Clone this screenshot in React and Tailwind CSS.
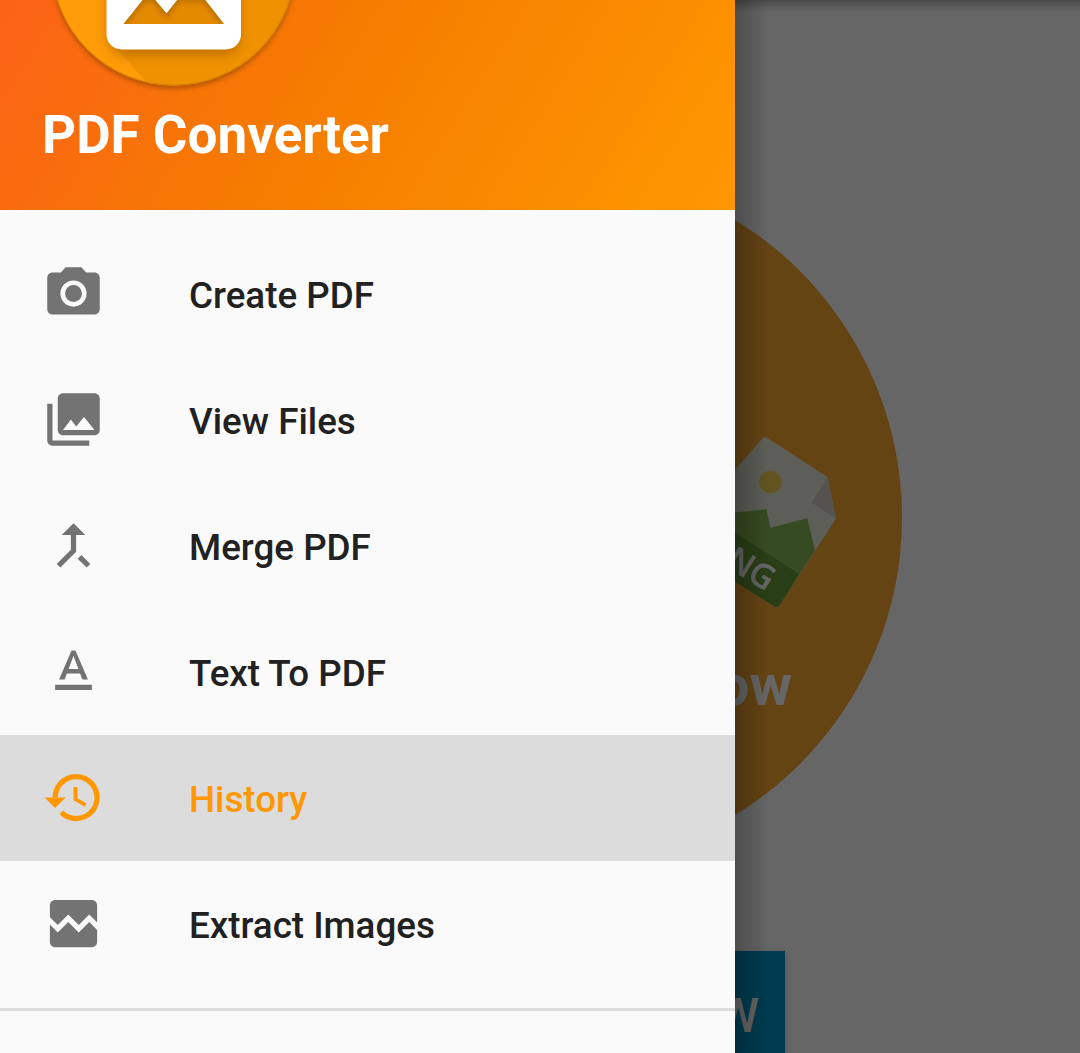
import { MdCameraAlt, MdCollections, MdCallMerge, MdTextFormat, MdHistory, MdBrokenImage } from "react-icons/md";

const items = [
  { label: "Create PDF", Icon: MdCameraAlt },
  { label: "View Files", Icon: MdCollections },
  { label: "Merge PDF", Icon: MdCallMerge },
  { label: "Text To PDF", Icon: MdTextFormat },
  { label: "History", Icon: MdHistory, active: true },
  { label: "Extract Images", Icon: MdBrokenImage },
];

function Logo() {
  return (
    <svg className="block h-[100px] w-[310px]" viewBox="0 0 310 100" aria-hidden="true">
      <defs>
        <filter id="soft" x="-20%" y="-20%" width="140%" height="140%">
          <feGaussianBlur stdDeviation="2.5" />
        </filter>
        <filter id="softer" x="-30%" y="-30%" width="160%" height="160%">
          <feGaussianBlur stdDeviation="6" />
        </filter>
        <clipPath id="disc">
          <circle cx="173.5" cy="-36.5" r="122" />
        </clipPath>
        <clipPath id="peaks">
          <path d="M123.5 24 143.5 -1H154.5L166.5 13.5 178 -1H204.5L224 24Z" />
        </clipPath>
      </defs>
      <circle cx="173.5" cy="-33.5" r="122" fill="#9a4a00" opacity=".75" filter="url(#soft)" />
      <circle cx="173.5" cy="-36.5" r="122" fill="#ff9c08" />
      <g clipPath="url(#disc)">
        <path d="M110 42 160 97H310V-10H230Z" fill="#f09200" />
        <rect x="108" y="-60" width="132" height="115" rx="16" fill="#a86000" opacity=".65" filter="url(#softer)" />
        <circle cx="173.5" cy="-36.5" r="121.5" fill="none" stroke="#c27600" strokeWidth="1" opacity=".6" />
      </g>
      <rect x="106.5" y="-60" width="134.5" height="109.5" rx="15" fill="#fff" />
      <g clipPath="url(#peaks)">
        <rect x="120" y="-4" width="110" height="30" fill="#e48a00" />
        <path d="M123.5 24 143.5 -1H154.5L166.5 13.5 178 -1H204.5L224 24" fill="none" stroke="#a86500" strokeWidth="6" opacity=".7" filter="url(#soft)" />
      </g>
    </svg>
  );
}

function PngFile() {
  return (
    <svg className="block h-[180px] w-[200px]" viewBox="640 430 200 180" aria-hidden="true">
      <path d="M767.5 438 827.7 477.3 836 518.7 779.5 605.5Q777.5 608 774.5 606.5L672 541 762 439Q764.5 436 767.5 438Z" fill="#5e5e58" />
      <path d="M827.7 477.3 836 518.7 811.5 502.5Z" fill="#56534e" />
      <circle cx="770.3" cy="482" r="11.3" fill="#625522" />
      <path d="M680 518 766.5 509.3 770.3 527.7 807.3 518.3 815 550.5 799.5 574 700 510Z" fill="#364b22" />
      <path d="M700 510 799.7 574 779.5 605.5Q777.5 608 774.5 606.5L680 547Z" fill="#293e16" />
      <text x="766" y="591.5" textAnchor="end" transform="rotate(32 766 591.5)" className="font-['Noto_Sans',sans-serif] text-[33px] font-medium" fill="#666" stroke="#666" strokeWidth=".6">PNG</text>
    </svg>
  );
}

export default function App() {
  return (
    <div className="relative h-[1053px] w-[1080px] overflow-hidden bg-[#666] font-[Roboto,sans-serif]">
      <main className="flex h-[1053px] flex-col overflow-hidden">
        <div className="h-3 shrink-0 bg-linear-to-b from-[#4b4b4b] to-[#666]" />
        <section className="mt-[157px] ml-[205px] flex h-[697px] w-[697px] shrink-0 flex-col items-end rounded-full bg-[#654414] pt-[261px]">
          <div className="mr-[62px]">
            <PngFile />
          </div>
          <p className="mt-[39px] mr-[110px] text-[58px] leading-[72px] font-bold text-[#666]">Now</p>
        </section>
        <div className="mt-[85px] ml-[295px] flex h-[130px] w-[490px] shrink-0 justify-end bg-[#003c51] pt-[37px] pr-[26px] text-[48px] leading-[56px] font-medium text-[#666] shadow-[0_3px_6px_rgba(0,0,0,0.25)]">
          VIEW
        </div>
      </main>

      <aside className="absolute inset-y-0 left-0 flex w-[735px] flex-col bg-[#fafafa]">
        <header className="h-[210px] shrink-0 bg-[linear-gradient(122.15deg,#ff5722_0%,#f57c00_52%,#ff9800_100%)] bg-[length:735px_462px] bg-bottom">
          <Logo />
          <h1 className="pl-[42px] text-[53px] leading-[71px] font-bold text-white">PDF Converter</h1>
        </header>
        <nav className="mt-[21px] flex flex-col">
          {items.map(({ label, Icon, active }) => (
            <a
              key={label}
              className={
                active
                  ? "flex h-[126px] items-center bg-[#dcdcdc] pl-[42px] text-[#ff9800]"
                  : "flex h-[126px] items-center pl-[42px] text-[#212121]"
              }
            >
              <Icon className={active ? "mb-px size-[63px] text-[#ff9800]" : "mb-px size-[63px] text-[#737373]"} />
              <span className="mt-1 ml-[84px] text-[36.75px] leading-[44px] font-medium">{label}</span>
            </a>
          ))}
        </nav>
        <hr className="mt-[21px] border-t-[3px] border-[#dcdcdc]" />
      </aside>
      <div className="absolute inset-y-0 left-[735px] w-[34px] bg-linear-to-r from-black/25 to-transparent" />
    </div>
  );
}
